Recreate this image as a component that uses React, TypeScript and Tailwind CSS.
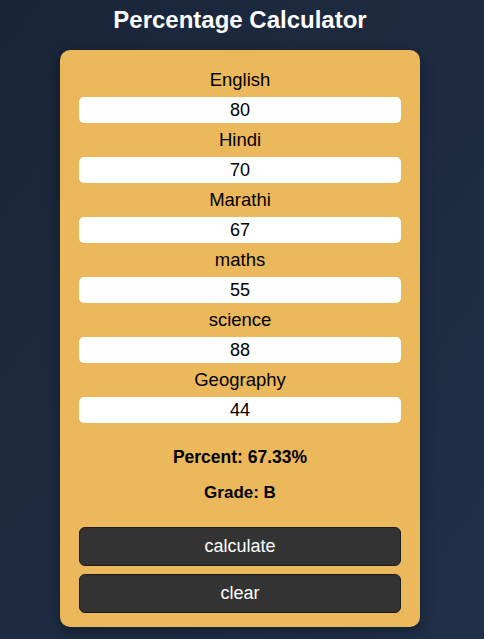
import React from "react";

const subjects = [
  { name: "English", value: "80" },
  { name: "Hindi", value: "70" },
  { name: "Marathi", value: "67" },
  { name: "maths", value: "55" },
  { name: "science", value: "88" },
  { name: "Geography", value: "44" },
];

export default function App() {
  return (
    <div
      className="min-h-[639px] w-full bg-gradient-to-br from-[#1a2539] to-[#203049] flex flex-col items-center pr-[4px]"
      style={{ fontFamily: '"Liberation Sans", Arial, sans-serif' }}
    >
      <h2 className="text-white font-bold text-[24px] leading-[28px] mt-[6px] mb-[16px]">
        Percentage Calculator
      </h2>
      <div className="w-[360px] bg-[#ebb85b] rounded-[10px] px-[19px] pt-[13px] pb-[14px] shadow-[0_4px_14px_rgba(0,0,0,0.35)] flex flex-col">
        {subjects.map((s) => (
          <div key={s.name} className="flex flex-col">
            <div className="h-[34px] flex items-center justify-center text-[18.5px] text-black">
              {s.name}
            </div>
            <input
              readOnly
              value={s.value}
              className="h-[26px] w-full bg-white rounded-[5px] text-center text-[18px] text-black outline-none"
            />
          </div>
        ))}
        <div className="h-[36px] mt-[16px] flex items-center justify-center font-bold text-[17.5px] text-black">
          Percent: 67.33%
        </div>
        <div className="h-[36px] flex items-center justify-center font-bold text-[17px] text-black">
          Grade: B
        </div>
        <button className="mt-[16px] h-[39px] w-full bg-[#333333] border border-[#1a1a1a] rounded-[6px] text-white text-[18px]">
          calculate
        </button>
        <button className="mt-[8px] h-[39px] w-full bg-[#333333] border border-[#1a1a1a] rounded-[6px] text-white text-[18px]">
          clear
        </button>
      </div>
    </div>
  );
}
